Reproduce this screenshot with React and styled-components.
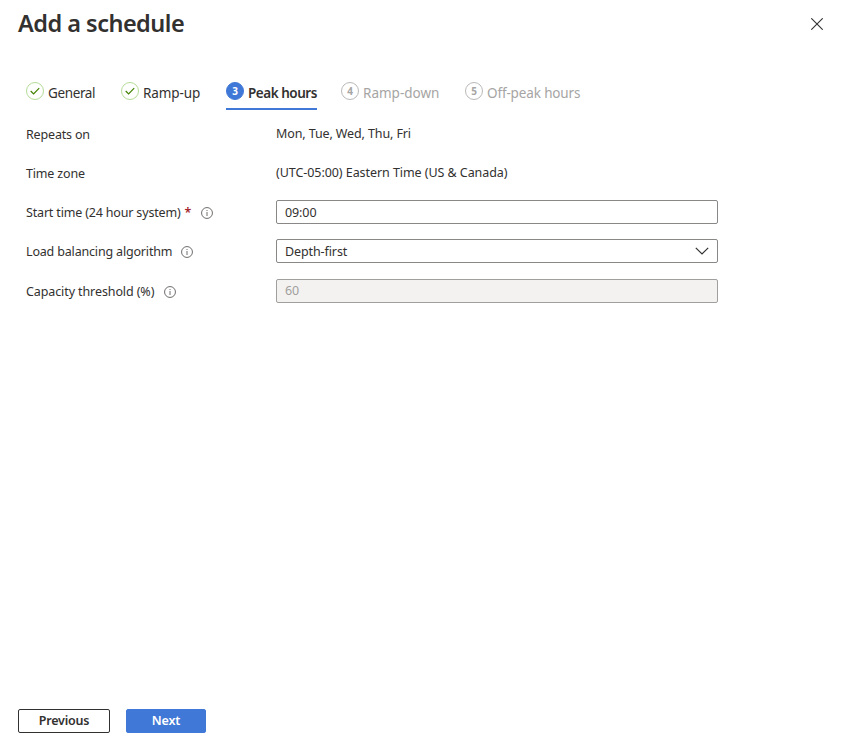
import React from "react";
import styled, { createGlobalStyle } from "styled-components";

const GlobalStyle = createGlobalStyle`
  * { box-sizing: border-box; }
  body {
    margin: 0;
    background: #fff;
    color: #323130;
    font-family: "Noto Sans", "Open Sans", sans-serif;
    font-size: 12.5px;
  }
`;

const Panel = styled.main`
  display: flex;
  flex-direction: column;
  height: 100vh;
  padding: 0 18px 20px;
  overflow: hidden;
`;

const Header = styled.header`
  display: flex;
  justify-content: space-between;
  align-items: center;
  height: 48px;
  padding-right: 12px;
`;

const Title = styled.h1`
  margin: 0;
  padding-bottom: 2px;
  font-size: 23.5px;
  font-weight: 600;
  line-height: 32px;
  letter-spacing: -0.52px;
`;

const CloseButton = styled.button`
  display: flex;
  padding: 0;
  border: 0;
  background: none;
  color: #323130;
`;

const Tabs = styled.nav`
  display: flex;
  height: 30px;
  margin: 32px 0 12px 8px;
`;

const Tab = styled.div`
  display: flex;
  align-items: flex-start;
  gap: 4px;
  width: ${(p) => p.$width}px;
  margin-right: ${(p) => p.$after}px;
  height: 30px;
  border-bottom: 2px solid ${(p) => (p.$state === "current" ? "#3f78d6" : "transparent")};
  color: ${(p) => (p.$state === "upcoming" ? "#a6a5a4" : "#323130")};
  font-size: 13.5px;
  font-weight: ${(p) => (p.$state === "current" ? 600 : 400)};
  line-height: 26px;
  white-space: nowrap;
  letter-spacing: ${(p) => p.$track || 0}px;
`;

const StepMark = styled.span`
  display: flex;
  flex: none;
  align-items: center;
  justify-content: center;
  width: 18px;
  height: 18px;
  margin-top: 2.4px;
  border: 1px solid
    ${(p) => ({ done: "#b5dc98", current: "#3f78d6", upcoming: "#bab9b8" })[p.$state]};
  border-radius: 50%;
  background: ${(p) => (p.$state === "current" ? "#3f78d6" : "#fff")};
  color: ${(p) => (p.$state === "current" ? "#fff" : "#a6a5a4")};
  font-size: 10px;
  font-weight: 700;
  line-height: 16px;
  letter-spacing: 0;
`;

const Form = styled.form`
  display: grid;
  grid-template-columns: 250px 442px;
  grid-template-rows: 24px 24px 24px 25px 24px;
  row-gap: 15px;
  padding-left: 8px;
`;

const Label = styled.label`
  display: flex;
  align-items: center;
  height: 26px;
  line-height: 26px;
  letter-spacing: ${(p) => p.$track ?? -0.17}px;
  white-space: nowrap;
`;

const Required = styled.span`
  margin: 0 1px 0 4px;
  color: #a4262c;
  font-weight: 600;
`;

const InfoIcon = styled.svg`
  margin-left: ${(p) => p.$gap || 9}px;
`;

const Value = styled.div`
  height: 24px;
  line-height: 23px;
  letter-spacing: ${(p) => p.$track || 0}px;
  white-space: nowrap;
`;

const Field = styled.div`
  display: flex;
  align-items: center;
  justify-content: space-between;
  height: 24px;
  padding: ${(p) => (p.$disabled ? 0 : 2)}px 8px 0;
  border: 1px solid ${(p) => (p.$disabled ? "#a19f9d" : "#8a8886")};
  border-radius: 2px;
  background: ${(p) => (p.$disabled ? "#f3f2f1" : "#fff")};
  color: ${(p) => (p.$disabled ? "#a19f9d" : "#323130")};
  line-height: 22px;
  letter-spacing: -0.1px;
`;

const Chevron = styled.svg`
  margin-bottom: 2px;
`;

const Footer = styled.footer`
  display: flex;
  gap: 16px;
  margin-top: auto;
`;

const Button = styled.button`
  width: ${(p) => (p.$primary ? 80 : 92)}px;
  height: 24px;
  padding: 0;
  border: 1px solid ${(p) => (p.$primary ? "#3f78d6" : "#323130")};
  border-radius: 2px;
  background: ${(p) => (p.$primary ? "#3f78d6" : "#fff")};
  color: ${(p) => (p.$primary ? "#fff" : "#323130")};
  font: 600 12.5px/20px "Noto Sans", "Open Sans", sans-serif;
  letter-spacing: -0.2px;
`;

const steps = [
  { name: "General", state: "done", width: 70, after: 25, track: -0.37 },
  { name: "Ramp-up", state: "done", width: 80, after: 25, track: -0.1 },
  { name: "Peak hours", state: "current", width: 91, after: 24, track: -0.48 },
  { name: "Ramp-down", state: "upcoming", width: 99, after: 25, track: 0 },
  { name: "Off-peak hours", state: "upcoming", width: 116, after: 0, track: -0.14 },
];

function Info({ gap }) {
  return (
    <InfoIcon $gap={gap} width="12" height="12" viewBox="0 0 12 12" fill="none" aria-hidden="true">
      <circle cx="6" cy="6" r="5.45" stroke="#605e5c" strokeWidth="0.9" />
      <path d="M6 5v4M6 3v1" stroke="#605e5c" strokeWidth="0.9" />
    </InfoIcon>
  );
}

function Check() {
  return (
    <svg width="10" height="8" viewBox="0 0 10 8" fill="none" aria-hidden="true">
      <path d="M.7 4 3.6 6.9 9.2 1.2" stroke="#428000" strokeWidth="1.2" />
    </svg>
  );
}

export default function App() {
  return (
    <>
      <GlobalStyle />
      <Panel>
        <Header>
          <Title>Add a schedule</Title>
          <CloseButton aria-label="Close">
            <svg width="12" height="12" viewBox="0 0 12 12" fill="none">
              <path d="M.3.3l11.4 11.4M11.7.3.3 11.7" stroke="currentColor" strokeWidth="1.1" />
            </svg>
          </CloseButton>
        </Header>
        <Tabs>
          {steps.map((s, i) => (
            <Tab key={s.name} $state={s.state} $width={s.width} $after={s.after} $track={s.track}>
              <StepMark $state={s.state}>{s.state === "done" ? <Check /> : i + 1}</StepMark>
              <span>{s.name}</span>
            </Tab>
          ))}
        </Tabs>
        <Form>
          <Label>Repeats on</Label>
          <Value $track={-0.11}>Mon, Tue, Wed, Thu, Fri</Value>
          <Label>Time zone</Label>
          <Value $track={-0.06}>(UTC-05:00) Eastern Time (US &amp; Canada)</Value>
          <Label>
            Start time (24 hour system)<Required>*</Required>
            <Info />
          </Label>
          <Field>09:00</Field>
          <Label>
            Load balancing algorithm
            <Info />
          </Label>
          <Field>
            Depth-first
            <Chevron width="14" height="8" viewBox="0 0 14 8" fill="none" aria-hidden="true">
              <path d="M.8.8 7 7 13.2.8" stroke="#323130" strokeWidth="1.2" />
            </Chevron>
          </Field>
          <Label $track={-0.1}>
            Capacity threshold (%)
            <Info gap={10} />
          </Label>
          <Field $disabled>60</Field>
        </Form>
        <Footer>
          <Button>Previous</Button>
          <Button $primary>Next</Button>
        </Footer>
      </Panel>
    </>
  );
}
